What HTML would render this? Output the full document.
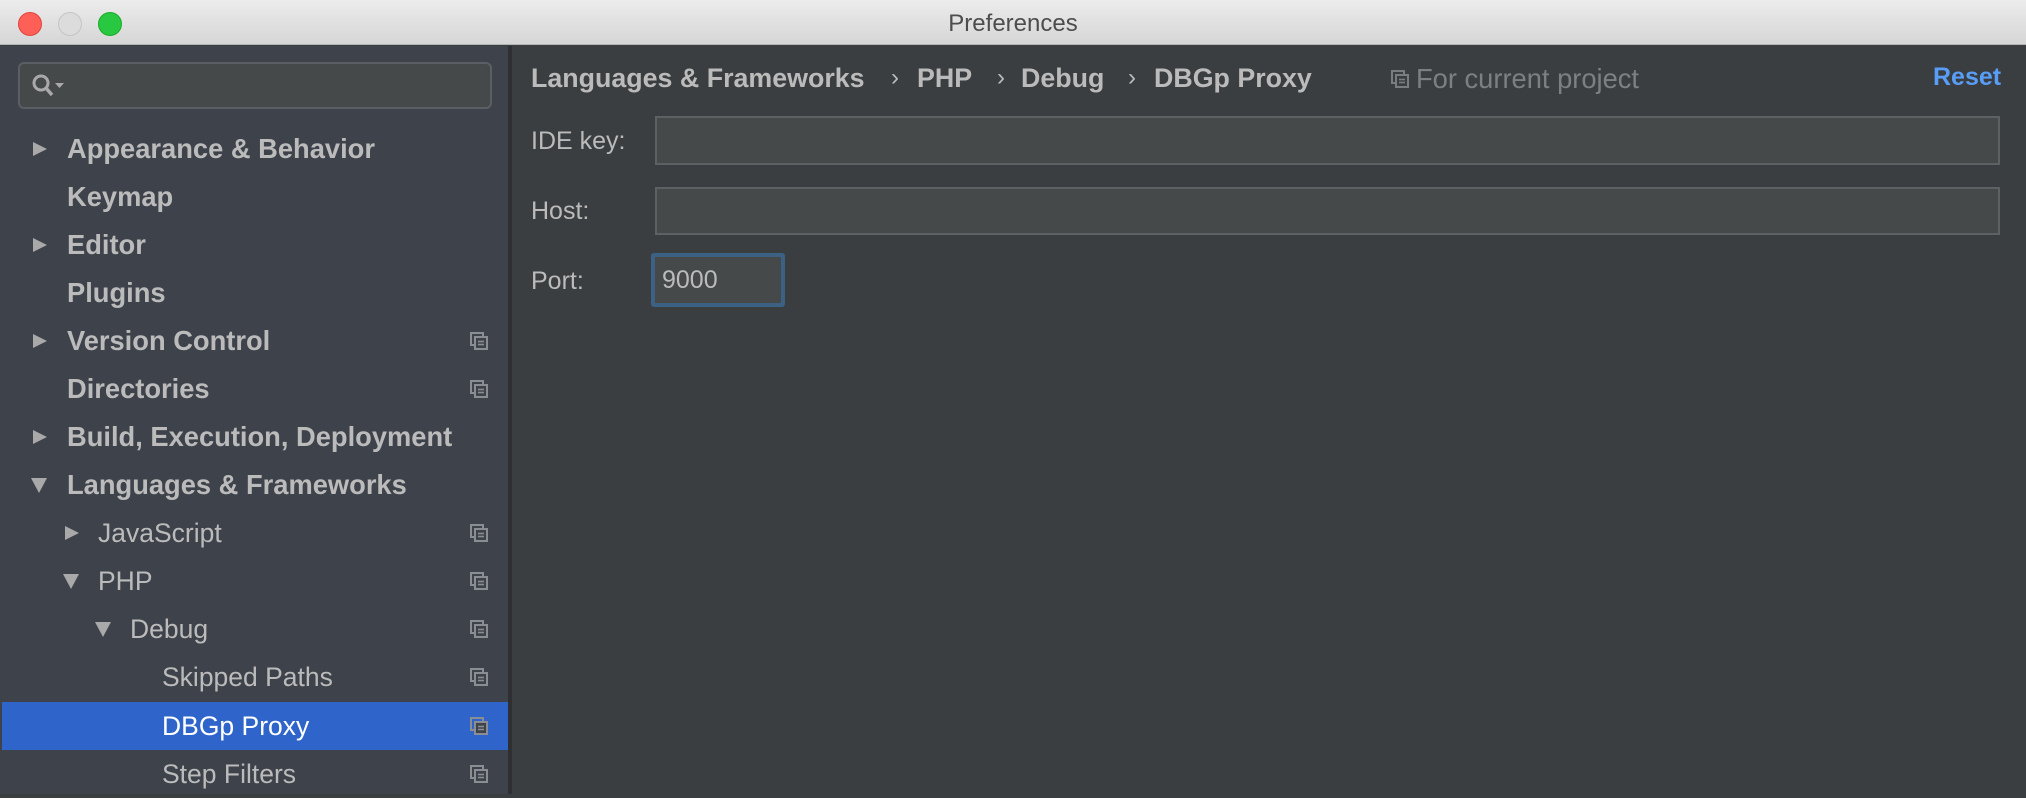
<!DOCTYPE html>
<html><head><style>
*{margin:0;padding:0;box-sizing:border-box}
body{width:2026px;height:794px;overflow:hidden;background:#3b3e41;font-family:"Liberation Sans",sans-serif;position:relative}
.title{position:absolute;left:0;top:0;width:2026px;height:45px;background:linear-gradient(#ececec,#d6d6d6);border-bottom:1px solid #b5b5b5;text-align:center;font-size:24px;line-height:47px;color:#4d4d4d}
.dot{position:absolute;top:12px;width:24px;height:24px;border-radius:50%}
.side{position:absolute;left:0;top:46px;width:508px;height:748px;background:#3e424a}
.div{position:absolute;left:508px;top:46px;width:4px;height:748px;background:#2d2f33}
.search{position:absolute;left:18px;top:62px;width:474px;height:47px;border:2px solid #5b5e63;border-radius:6px;background:#45494a}
.row{position:absolute;left:0;width:508px;height:48px;line-height:48px;font-size:26.5px;color:#bbbbbb}
.b{font-weight:bold;font-size:27.3px}
.tri{position:absolute;top:16px}
.ci{position:absolute;left:470px;top:15px}
.sel{background:#2f65ca;color:#fff}
.lbl{position:absolute;font-size:24px;color:#bbbbbb}
.bc{font-size:26.8px;font-weight:bold;top:63px}
.field{position:absolute;background:#45494a;border:2px solid #5e6163}
</style></head><body>
<div class="title">Preferences
<div class="dot" style="left:18px;background:#fe5f57;border:1px solid #e0443e"></div>
<div class="dot" style="left:58px;background:#dcdcdc;border:1px solid #c4c4c4"></div>
<div class="dot" style="left:98px;background:#28c840;border:1px solid #1aab29"></div>
</div>
<div class="side"></div>
<div class="search"><svg width="40" height="30" style="position:absolute;left:10px;top:8px"><circle cx="11" cy="11" r="7" fill="none" stroke="#a9a9a9" stroke-width="3"/><line x1="16" y1="16" x2="22" y2="23" stroke="#a9a9a9" stroke-width="3.5"/><path d="M25 11h9l-4.5 5z" fill="#a9a9a9"/></svg></div>
<div class="div"></div>
<svg width="0" height="0" style="position:absolute"><defs>
<g id="cp"><rect x="1" y="1" width="12" height="12" fill="none" stroke="#8a8d92" stroke-width="2"/><rect x="5" y="5" width="12" height="12" fill="#3e424a" stroke="#8a8d92" stroke-width="2"/><line x1="8" y1="9.5" x2="14" y2="9.5" stroke="#8a8d92" stroke-width="1.6"/><line x1="8" y1="12.5" x2="14" y2="12.5" stroke="#8a8d92" stroke-width="1.6"/></g>
<path id="tr" d="M1 1L15 8L1 15Z" fill="#a9a9a9"/>
<path id="td" d="M0 1H16L8 16Z" fill="#a9a9a9"/>
</defs></svg>

<div class="row b" style="top:125px"><svg class="tri" style="left:32px" width="16" height="16"><use href="#tr"/></svg><span style="position:absolute;left:67px">Appearance &amp; Behavior</span></div>
<div class="row b" style="top:173px"><span style="position:absolute;left:67px">Keymap</span></div>
<div class="row b" style="top:221px"><svg class="tri" style="left:32px" width="16" height="16"><use href="#tr"/></svg><span style="position:absolute;left:67px">Editor</span></div>
<div class="row b" style="top:269px"><span style="position:absolute;left:67px">Plugins</span></div>
<div class="row b" style="top:317px"><svg class="tri" style="left:32px" width="16" height="16"><use href="#tr"/></svg><span style="position:absolute;left:67px">Version Control</span><svg class="ci" width="18" height="18"><use href="#cp"/></svg></div>
<div class="row b" style="top:365px"><span style="position:absolute;left:67px">Directories</span><svg class="ci" width="18" height="18"><use href="#cp"/></svg></div>
<div class="row b" style="top:413px"><svg class="tri" style="left:32px" width="16" height="16"><use href="#tr"/></svg><span style="position:absolute;left:67px">Build, Execution, Deployment</span></div>
<div class="row b" style="top:461px"><svg class="tri" style="left:31px" width="16" height="16"><use href="#td"/></svg><span style="position:absolute;left:67px">Languages &amp; Frameworks</span></div>
<div class="row" style="top:509px"><svg class="tri" style="left:64px" width="16" height="16"><use href="#tr"/></svg><span style="position:absolute;left:98px">JavaScript</span><svg class="ci" width="18" height="18"><use href="#cp"/></svg></div>
<div class="row" style="top:557px"><svg class="tri" style="left:63px" width="16" height="16"><use href="#td"/></svg><span style="position:absolute;left:98px">PHP</span><svg class="ci" width="18" height="18"><use href="#cp"/></svg></div>
<div class="row" style="top:605px"><svg class="tri" style="left:95px" width="16" height="16"><use href="#td"/></svg><span style="position:absolute;left:130px">Debug</span><svg class="ci" width="18" height="18"><use href="#cp"/></svg></div>
<div class="row" style="top:653px"><span style="position:absolute;left:162px">Skipped Paths</span><svg class="ci" width="18" height="18"><use href="#cp"/></svg></div>
<div class="row sel" style="top:702px;left:2px;width:506px"><span style="position:absolute;left:160px">DBGp Proxy</span><svg class="ci" width="18" height="18" style="left:468px"><use href="#cp"/></svg></div>
<div class="row" style="top:750px"><span style="position:absolute;left:162px">Step Filters</span><svg class="ci" width="18" height="18"><use href="#cp"/></svg></div>

<div class="lbl bc" style="left:531px">Languages &amp; Frameworks</div>
<div class="lbl" style="left:891px;top:64px">›</div>
<div class="lbl bc" style="left:917px">PHP</div>
<div class="lbl" style="left:997px;top:64px">›</div>
<div class="lbl bc" style="left:1021px">Debug</div>
<div class="lbl" style="left:1128px;top:64px">›</div>
<div class="lbl bc" style="left:1154px">DBGp Proxy</div>
<svg width="18" height="18" style="position:absolute;left:1391px;top:70px"><g><rect x="1" y="1" width="12" height="12" fill="none" stroke="#7a7d80" stroke-width="2"/><rect x="5" y="5" width="12" height="12" fill="#3b3e41" stroke="#7a7d80" stroke-width="2"/><line x1="8" y1="9.5" x2="14" y2="9.5" stroke="#7a7d80" stroke-width="1.6"/><line x1="8" y1="12.5" x2="14" y2="12.5" stroke="#7a7d80" stroke-width="1.6"/></g></svg>
<div class="lbl" style="left:1416px;top:63px;font-size:27.3px;color:#7d8083">For current project</div>
<div class="lbl b" style="left:1933px;top:63px;font-size:25px;color:#589df6">Reset</div>

<div class="lbl" style="left:531px;top:127px;font-size:25px">IDE key:</div>
<div class="field" style="left:655px;top:116px;width:1345px;height:49px"></div>
<div class="lbl" style="left:531px;top:197px;font-size:25px">Host:</div>
<div class="field" style="left:655px;top:187px;width:1345px;height:48px"></div>
<div class="lbl" style="left:531px;top:267px;font-size:25px">Port:</div>
<div class="field" style="left:651px;top:253px;width:134px;height:54px;border:4px solid #3d6185;border-radius:3px"></div>
<div class="lbl" style="left:662px;top:266px;font-size:25px">9000</div>
</body></html>
